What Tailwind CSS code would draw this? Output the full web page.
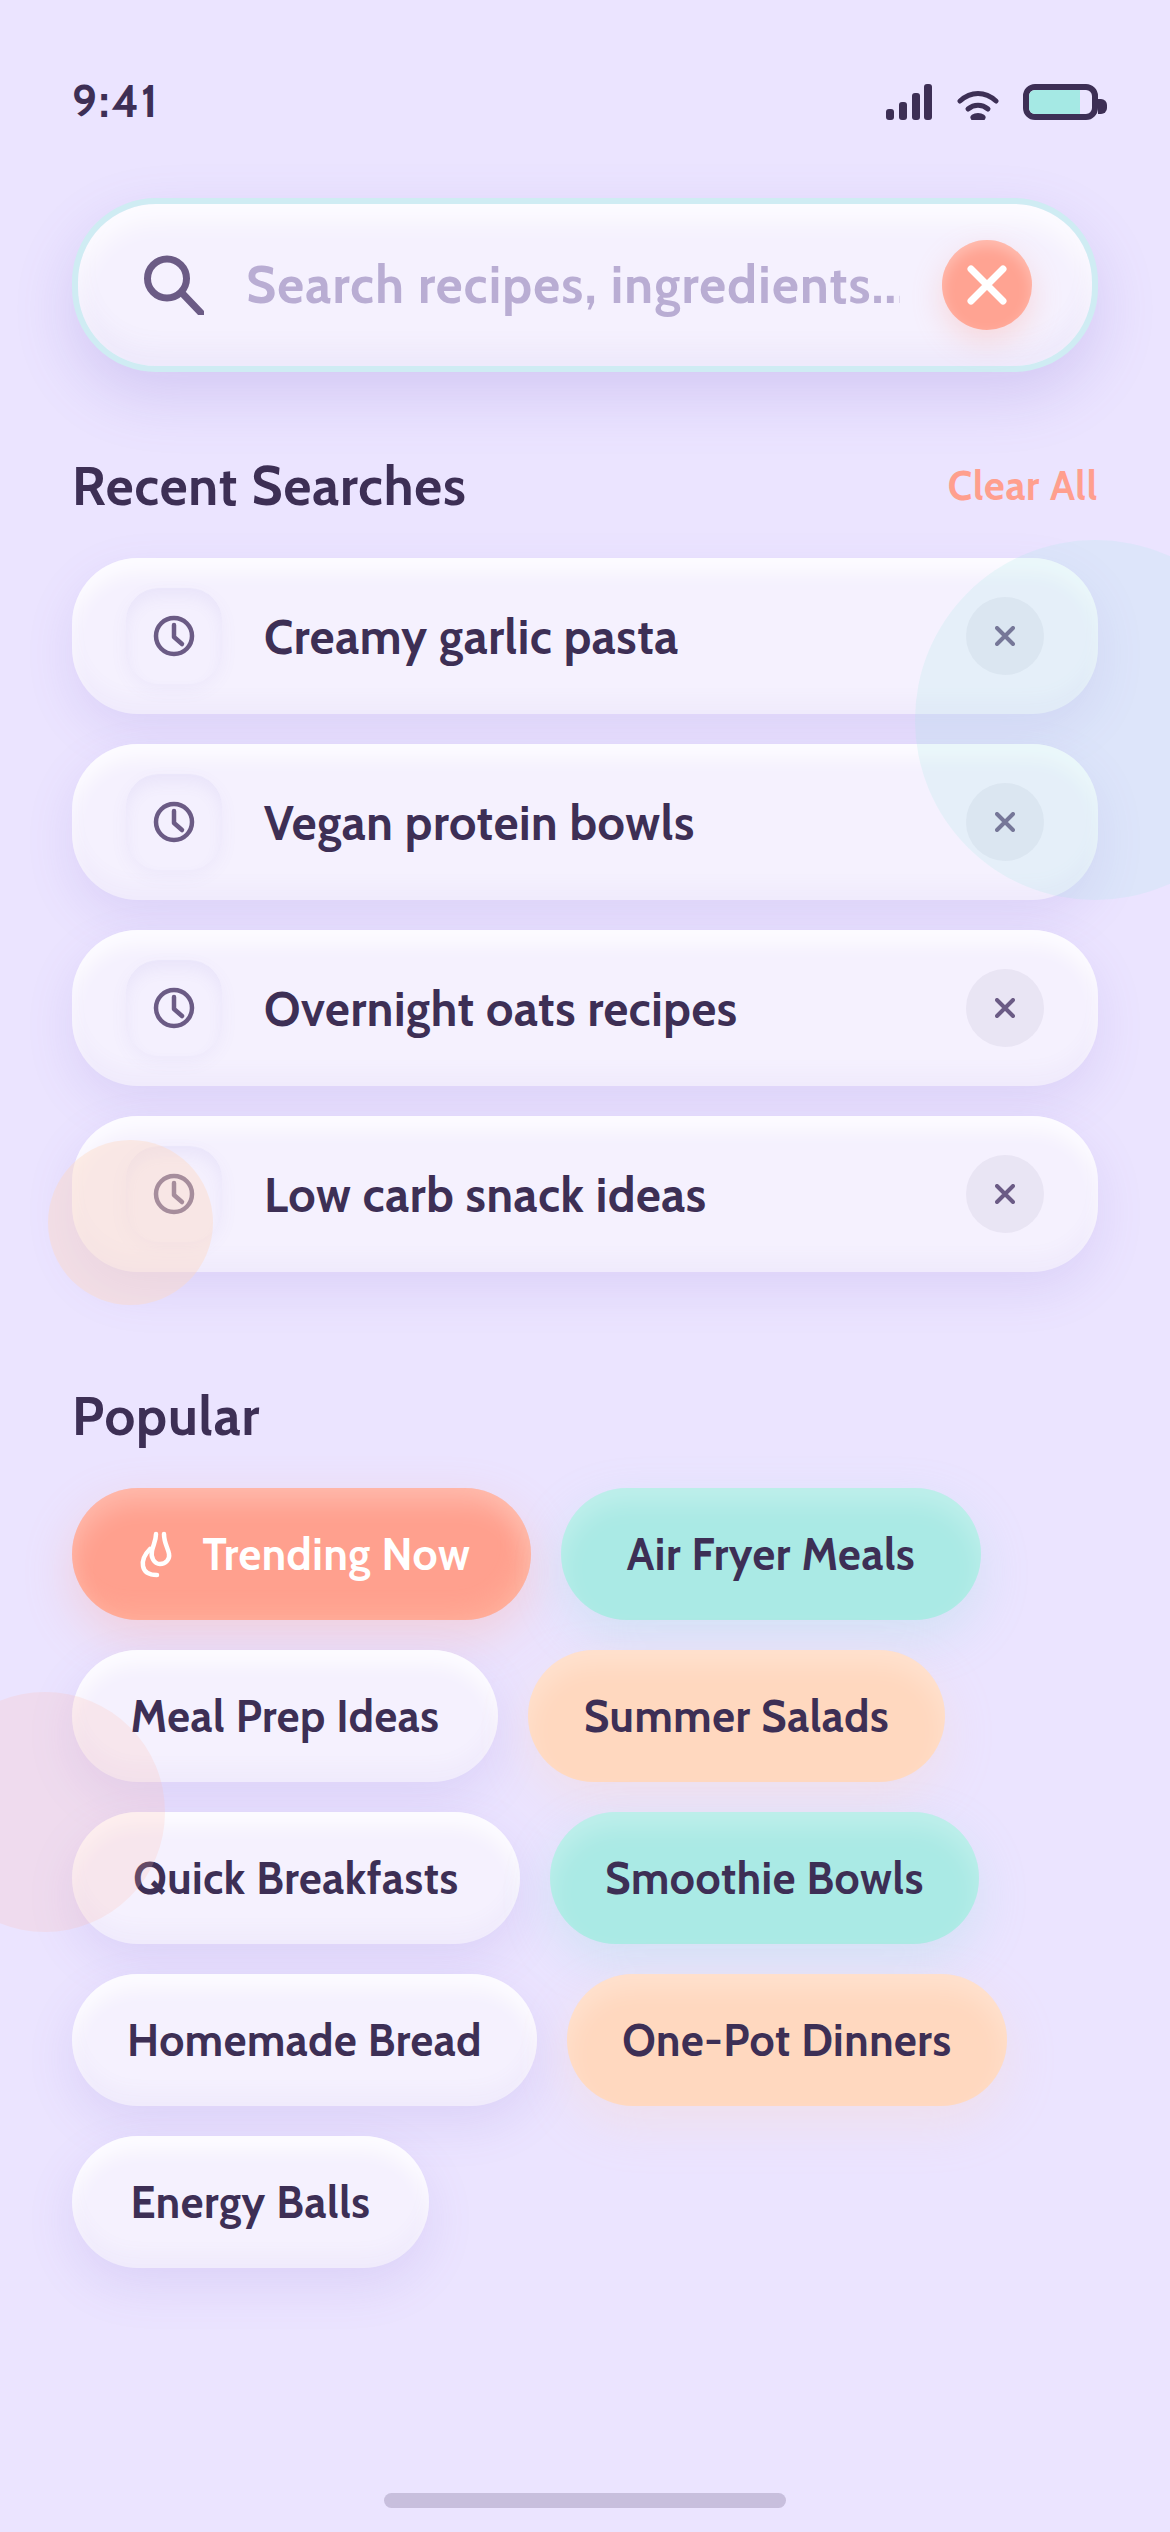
<!DOCTYPE html>
<html lang="en">
<head>
  <meta charset="UTF-8">
  <meta name="viewport" content="width=device-width,initial-scale=1.0">
  <title>Recipe Search</title>
  <script src="https://cdn.jsdelivr.net/npm/@tailwindcss/browser@4"></script>
</head>
<body class="bg-[#ebe4ff]">
  <div class="relative w-[1170px] h-[2532px] overflow-hidden bg-[#ebe4ff] font-['Cabin','Open_Sans',sans-serif] text-[#3d2f55]">
    <main class="px-[72px] pt-[84px]">
      <!-- status bar -->
      <div class="flex items-center justify-between h-[36px]">
        <span class="text-[44px] leading-[36px] font-bold tracking-[2.5px]">9:41</span>
        <div class="flex items-end relative">
          <svg class="w-[46px] h-[36px]" viewBox="0 0 46 36" fill="#3d2f55">
            <rect x="0" y="25" width="8" height="11" rx="3"/><rect x="13" y="18" width="8" height="18" rx="3"/><rect x="26" y="9" width="8" height="27" rx="3"/><rect x="38" y="0" width="8" height="36" rx="3"/>
          </svg>
          <svg class="w-[42px] h-[30px] ml-[25px]" viewBox="0 0 42 30" fill="none" stroke="#3d2f55" stroke-width="5" stroke-linecap="round">
            <path d="M3 11C14 1 28 1 39 11"/><path d="M11 19C17 14 25 14 31 19"/><path d="M17 27.500C19 26 23 26 25 27.500" stroke-width="7"/>
          </svg>
          <div class="ml-[24px] w-[75px] h-[36px] rounded-[12px] border-[6px] border-[#3d2f55] bg-[#ebe4ff] overflow-hidden">
            <div class="w-[51px] h-full bg-[#a5e9e4]"></div>
          </div>
          <div class="absolute right-[-9px] top-[15px] w-[9px] h-[15px] rounded-r-[6px] bg-[#3d2f55]"></div>
        </div>
      </div>

      <!-- search -->
      <div class="mt-[78px] h-[174px] rounded-[84px] border-[6px] border-[#cfecf3] bg-[#f5f1fe] shadow-[0_24px_60px_rgba(120,95,200,0.2),inset_0_18px_24px_rgba(255,255,255,0.75),inset_0_-18px_24px_rgba(120,95,200,0.05)] flex items-center pl-[66px] pr-[60px]">
        <svg class="w-[60px] h-[60px] shrink-0" viewBox="0 0 60 60" fill="none" stroke="#6b5b85" stroke-width="7" stroke-linecap="round">
          <circle cx="23" cy="23.500" r="19.500"/><path d="M38 38L57 58"/>
        </svg>
        <span class="ml-[42px] w-[654px] overflow-hidden whitespace-nowrap text-[52px] font-bold tracking-[1.200px] text-[#b9add3]">Search recipes, ingredients...</span>
        <button class="ml-auto w-[90px] h-[90px] shrink-0 rounded-full bg-[#ffa392] shadow-[0_12px_30px_rgba(255,159,142,0.3),inset_0_6px_14px_rgba(255,255,255,0.3)] flex items-center justify-center">
          <svg class="w-[40px] h-[40px]" viewBox="0 0 40 40" fill="none" stroke="#fff" stroke-width="7" stroke-linecap="round"><path d="M4 4L36 36M36 4L4 36"/></svg>
        </button>
      </div>

      <!-- recent -->
      <div class="mt-[84px] flex items-center justify-between h-[60px]">
        <h2 class="text-[54px] leading-[60px] font-bold tracking-[0.9px]">Recent Searches</h2>
        <span class="text-[40px] font-bold tracking-[0.8px] text-[#ff9f8e]">Clear All</span>
      </div>
      <ul class="mt-[42px] flex flex-col gap-[30px]">
        <li class="h-[156px] rounded-[66px] bg-[#f5f1fe] shadow-[0_18px_48px_rgba(120,95,200,0.13),inset_0_15px_18px_rgba(255,255,255,0.75),inset_0_-15px_18px_rgba(120,95,200,0.04)] flex items-center px-[54px]">
          <span class="w-[96px] h-[96px] rounded-[33px] bg-[#f4f0fe] shadow-[0_6px_18px_rgba(120,95,200,0.06),inset_0_9px_15px_rgba(120,95,200,0.07)] flex items-center justify-center">
            <svg class="w-[42px] h-[42px]" viewBox="0 0 42 42" fill="none" stroke="#6b5b85" stroke-width="4.500" stroke-linecap="round" stroke-linejoin="round"><circle cx="21" cy="21" r="18"/><path d="M21 10V22L29 29"/></svg>
          </span>
          <span class="ml-[42px] pt-[2px] text-[48px] font-bold tracking-[0.6px]">Creamy garlic pasta</span>
          <button class="ml-auto w-[78px] h-[78px] rounded-full bg-[#6b5b85]/8 flex items-center justify-center">
            <svg class="w-[20px] h-[20px]" viewBox="0 0 20 20" fill="none" stroke="#6b5b85" stroke-width="4" stroke-linecap="round"><path d="M2 2L18 18M18 2L2 18"/></svg>
          </button>
        </li>
        <li class="h-[156px] rounded-[66px] bg-[#f5f1fe] shadow-[0_18px_48px_rgba(120,95,200,0.13),inset_0_15px_18px_rgba(255,255,255,0.75),inset_0_-15px_18px_rgba(120,95,200,0.04)] flex items-center px-[54px]">
          <span class="w-[96px] h-[96px] rounded-[33px] bg-[#f4f0fe] shadow-[0_6px_18px_rgba(120,95,200,0.06),inset_0_9px_15px_rgba(120,95,200,0.07)] flex items-center justify-center">
            <svg class="w-[42px] h-[42px]" viewBox="0 0 42 42" fill="none" stroke="#6b5b85" stroke-width="4.500" stroke-linecap="round" stroke-linejoin="round"><circle cx="21" cy="21" r="18"/><path d="M21 10V22L29 29"/></svg>
          </span>
          <span class="ml-[42px] pt-[2px] text-[48px] font-bold tracking-[0.6px]">Vegan protein bowls</span>
          <button class="ml-auto w-[78px] h-[78px] rounded-full bg-[#6b5b85]/8 flex items-center justify-center">
            <svg class="w-[20px] h-[20px]" viewBox="0 0 20 20" fill="none" stroke="#6b5b85" stroke-width="4" stroke-linecap="round"><path d="M2 2L18 18M18 2L2 18"/></svg>
          </button>
        </li>
        <li class="h-[156px] rounded-[66px] bg-[#f5f1fe] shadow-[0_18px_48px_rgba(120,95,200,0.13),inset_0_15px_18px_rgba(255,255,255,0.75),inset_0_-15px_18px_rgba(120,95,200,0.04)] flex items-center px-[54px]">
          <span class="w-[96px] h-[96px] rounded-[33px] bg-[#f4f0fe] shadow-[0_6px_18px_rgba(120,95,200,0.06),inset_0_9px_15px_rgba(120,95,200,0.07)] flex items-center justify-center">
            <svg class="w-[42px] h-[42px]" viewBox="0 0 42 42" fill="none" stroke="#6b5b85" stroke-width="4.500" stroke-linecap="round" stroke-linejoin="round"><circle cx="21" cy="21" r="18"/><path d="M21 10V22L29 29"/></svg>
          </span>
          <span class="ml-[42px] pt-[2px] text-[48px] font-bold tracking-[0.6px]">Overnight oats recipes</span>
          <button class="ml-auto w-[78px] h-[78px] rounded-full bg-[#6b5b85]/8 flex items-center justify-center">
            <svg class="w-[20px] h-[20px]" viewBox="0 0 20 20" fill="none" stroke="#6b5b85" stroke-width="4" stroke-linecap="round"><path d="M2 2L18 18M18 2L2 18"/></svg>
          </button>
        </li>
        <li class="h-[156px] rounded-[66px] bg-[#f5f1fe] shadow-[0_18px_48px_rgba(120,95,200,0.13),inset_0_15px_18px_rgba(255,255,255,0.75),inset_0_-15px_18px_rgba(120,95,200,0.04)] flex items-center px-[54px]">
          <span class="w-[96px] h-[96px] rounded-[33px] bg-[#f4f0fe] shadow-[0_6px_18px_rgba(120,95,200,0.06),inset_0_9px_15px_rgba(120,95,200,0.07)] flex items-center justify-center">
            <svg class="w-[42px] h-[42px]" viewBox="0 0 42 42" fill="none" stroke="#6b5b85" stroke-width="4.500" stroke-linecap="round" stroke-linejoin="round"><circle cx="21" cy="21" r="18"/><path d="M21 10V22L29 29"/></svg>
          </span>
          <span class="ml-[42px] pt-[2px] text-[48px] font-bold tracking-[0.6px]">Low carb snack ideas</span>
          <button class="ml-auto w-[78px] h-[78px] rounded-full bg-[#6b5b85]/8 flex items-center justify-center">
            <svg class="w-[20px] h-[20px]" viewBox="0 0 20 20" fill="none" stroke="#6b5b85" stroke-width="4" stroke-linecap="round"><path d="M2 2L18 18M18 2L2 18"/></svg>
          </button>
        </li>
      </ul>

      <!-- popular -->
      <h2 class="mt-[114px] text-[54px] leading-[60px] font-bold tracking-[0.9px]">Popular</h2>
      <div class="mt-[42px] flex flex-wrap gap-[30px] text-[44px] leading-[50px] font-bold tracking-[0.6px]">
        <span class="w-[459px] h-[132px] pt-[2px] rounded-[66px] flex items-center justify-center bg-[#ffa08e] text-white shadow-[0_18px_48px_rgba(255,159,142,0.3),inset_0_15px_24px_rgba(255,255,255,0.25),inset_-9px_-9px_24px_rgba(255,220,190,0.2)]">
          <svg class="w-[48px] h-[48px] mr-[22px]" viewBox="-8 0 48 48" fill="none" stroke="#fff" stroke-width="4.500" stroke-linecap="round"><path d="M16 3C16 10 13 14 12 20C10.500 26 14 33 20 33C26 33 30 28 29 23C28 17 24 12 24 3"/><path d="M10 18C5 23 2 29 3 35C4 41 9 44 17 44"/></svg>
          Trending Now
        </span>
        <span class="w-[420px] h-[132px] pt-[2px] rounded-[66px] flex items-center justify-center bg-[#aaeae5] shadow-[0_18px_48px_rgba(140,220,215,0.25),inset_0_15px_24px_rgba(255,255,255,0.25)]">Air Fryer Meals</span>
        <span class="w-[426px] h-[132px] pt-[2px] rounded-[66px] flex items-center justify-center bg-[#f5f1fe] shadow-[0_18px_48px_rgba(120,95,200,0.13),inset_0_15px_18px_rgba(255,255,255,0.75),inset_0_-15px_18px_rgba(120,95,200,0.04)]">Meal Prep Ideas</span>
        <span class="w-[417px] h-[132px] pt-[2px] rounded-[66px] flex items-center justify-center bg-[#ffd8bf] shadow-[0_18px_48px_rgba(255,210,180,0.25),inset_0_15px_24px_rgba(255,255,255,0.25)]">Summer Salads</span>
        <span class="w-[448px] h-[132px] pt-[2px] rounded-[66px] flex items-center justify-center bg-[#f5f1fe] shadow-[0_18px_48px_rgba(120,95,200,0.13),inset_0_15px_18px_rgba(255,255,255,0.75),inset_0_-15px_18px_rgba(120,95,200,0.04)]">Quick Breakfasts</span>
        <span class="w-[429px] h-[132px] pt-[2px] rounded-[66px] flex items-center justify-center bg-[#aaeae5] shadow-[0_18px_48px_rgba(140,220,215,0.25),inset_0_15px_24px_rgba(255,255,255,0.25)]">Smoothie Bowls</span>
        <span class="w-[465px] h-[132px] pt-[2px] rounded-[66px] flex items-center justify-center bg-[#f5f1fe] shadow-[0_18px_48px_rgba(120,95,200,0.13),inset_0_15px_18px_rgba(255,255,255,0.75),inset_0_-15px_18px_rgba(120,95,200,0.04)]">Homemade Bread</span>
        <span class="w-[440px] h-[132px] pt-[2px] rounded-[66px] flex items-center justify-center bg-[#ffd8bf] shadow-[0_18px_48px_rgba(255,210,180,0.25),inset_0_15px_24px_rgba(255,255,255,0.25)]">One-Pot Dinners</span>
        <span class="w-[357px] h-[132px] pt-[2px] rounded-[66px] flex items-center justify-center bg-[#f5f1fe] shadow-[0_18px_48px_rgba(120,95,200,0.13),inset_0_15px_18px_rgba(255,255,255,0.75),inset_0_-15px_18px_rgba(120,95,200,0.04)]">Energy Balls</span>
      </div>
    </main>

    <!-- decorative circles over the content -->
    <div class="absolute left-[915px] top-[540px] w-[360px] h-[360px] rounded-full bg-[#a5e9e4]/20 pointer-events-none"></div>
    <div class="absolute left-[48px] top-[1140px] w-[165px] h-[165px] rounded-full bg-[#ffd8bf]/40 pointer-events-none"></div>
    <div class="absolute left-[-75px] top-[1692px] w-[240px] h-[240px] rounded-full bg-[#ffb8a8]/20 pointer-events-none"></div>

    <!-- home indicator -->
    <div class="absolute left-[384px] top-[2493px] w-[402px] h-[15px] rounded-full bg-[#3d2f55]/20"></div>
  </div>
</body>
</html>
